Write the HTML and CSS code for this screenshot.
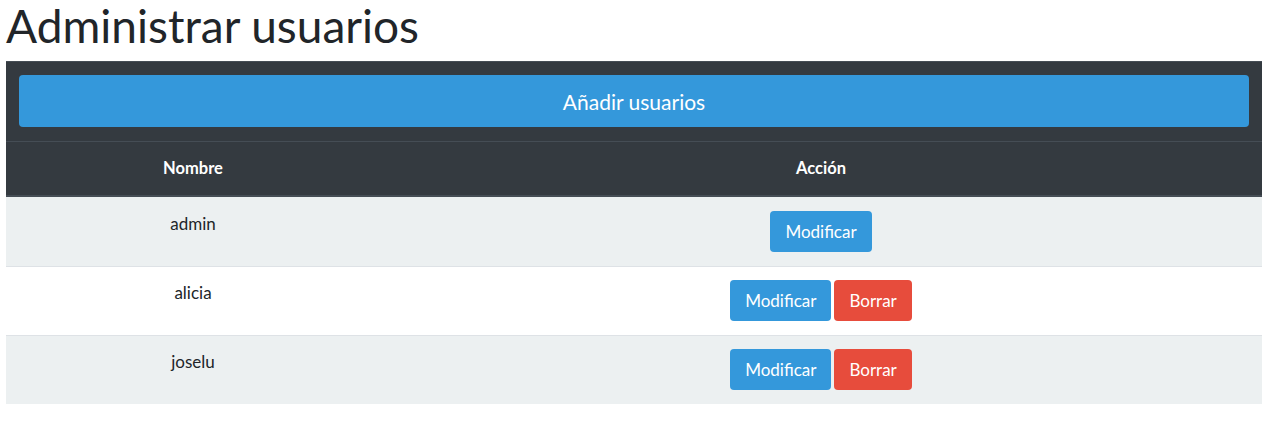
FILE: index.html
```html
<!DOCTYPE html>
<html lang="es">
<head>
<meta charset="utf-8">
<title>Administrar usuarios</title>
<link rel="stylesheet" href="styles.css">
</head>
<body>
<div class="page">
  <h1 class="title">Administrar usuarios</h1>
  <table class="users">
    <thead>
      <tr class="add-row">
        <th colspan="2"><button class="btn-add">Añadir usuarios</button></th>
      </tr>
      <tr class="head-row">
        <th class="col-name">Nombre</th>
        <th>Acción</th>
      </tr>
    </thead>
    <tbody>
      <tr class="striped">
        <td class="col-name">admin</td>
        <td><div class="actions"><button class="btn btn-mod">Modificar</button></div></td>
      </tr>
      <tr>
        <td class="col-name">alicia</td>
        <td><div class="actions"><button class="btn btn-mod">Modificar</button><button class="btn btn-del">Borrar</button></div></td>
      </tr>
      <tr class="striped">
        <td class="col-name">joselu</td>
        <td><div class="actions"><button class="btn btn-mod">Modificar</button><button class="btn btn-del">Borrar</button></div></td>
      </tr>
    </tbody>
  </table>
</div>
</body>
</html>
```
FILE: styles.css
```css
* { box-sizing: border-box; }
body {
  margin: 0;
  background: #fff;
  font-family: Lato, "Open Sans", sans-serif;
  font-size: 17px;
  color: #212529;
}
.page {
  padding: 0 12px 0 6px;
}
.title {
  margin: 0 0 9px;
  font-size: 46px;
  line-height: 52px;
  font-weight: 400;
  color: #212529;
}
.users {
  width: 100%;
  border-collapse: separate;
  border-spacing: 0;
}
.users th, .users td {
  text-align: center;
}
.col-name { width: 374px; }
.add-row th {
  background: #343a40;
  border-top: 1px solid #454d55;
  padding: 13px 13px 14px;
}
.btn-add {
  display: block;
  width: 100%;
  height: 52px;
  border: 0;
  border-radius: 4px;
  background: #3498db;
  color: #fff;
  font-family: inherit;
  font-size: 21px;
  padding: 0;
}
.head-row th {
  background: #343a40;
  color: #fff;
  font-size: 16.5px;
  font-weight: 700;
  border-top: 1px solid #454d55;
  border-bottom: 2px solid #454d55;
  padding: 15px 13px 16px;
  line-height: 22px;
}
.users td {
  border-top: 1px solid #dee2e6;
  padding: 13px 13px 14px;
  vertical-align: top;
  line-height: 25px;
}
.users tbody tr:first-child td { border-top-color: transparent; }
.striped td { background: #ecf0f1; }
.actions {
  display: flex;
  justify-content: center;
  gap: 3px;
}
.btn {
  height: 41px;
  border: 0;
  border-radius: 4px;
  padding: 0 15px;
  color: #fff;
  font-family: inherit;
  font-size: 17px;
}
.btn-mod { background: #3498db; }
.btn-del { background: #e74c3c; }
```
